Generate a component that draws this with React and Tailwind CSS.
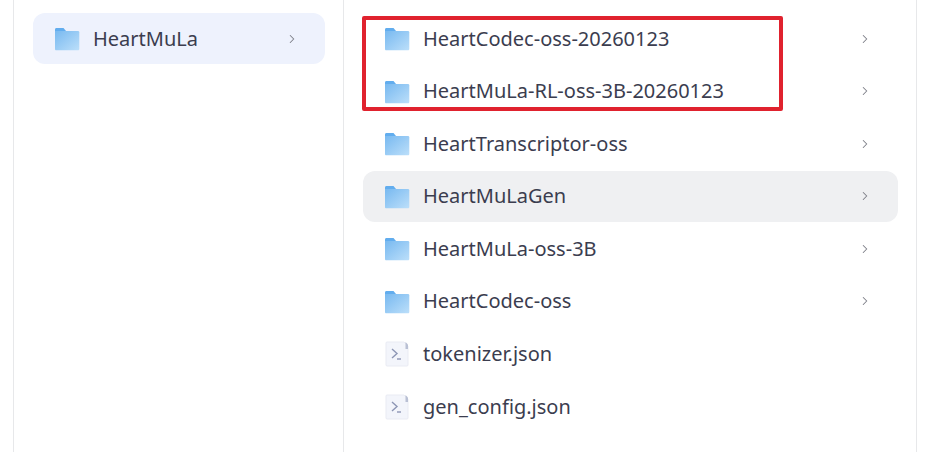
import React from 'react';
import { ChevronRight } from 'lucide-react';

const items = [
  { name: 'HeartCodec-oss-20260123', type: 'folder' },
  { name: 'HeartMuLa-RL-oss-3B-20260123', type: 'folder' },
  { name: 'HeartTranscriptor-oss', type: 'folder' },
  { name: 'HeartMuLaGen', type: 'folder', hover: true },
  { name: 'HeartMuLa-oss-3B', type: 'folder' },
  { name: 'HeartCodec-oss', type: 'folder' },
  { name: 'tokenizer.json', type: 'file' },
  { name: 'gen_config.json', type: 'file' },
];

function FolderIcon({ id }) {
  return (
    <svg width="26" height="25" viewBox="0 0 26 25" className="shrink-0">
      <defs>
        <linearGradient id={id} x1="0" y1="0" x2="1" y2="1">
          <stop offset="0" stopColor="#78b9f0" />
          <stop offset="1" stopColor="#bcdffa" />
        </linearGradient>
      </defs>
      <path d="M1 3.5C1 2.5 1.7 2 2.5 2H9.5L12 5H1Z" fill="#62adee" />
      <path d="M1 5H24C24.7 5 25.3 5.6 25.3 6.3V23C25.3 23.7 24.7 24.3 24 24.3H2.2C1.5 24.3 1 23.7 1 23Z" fill={`url(#${id})`} />
      <rect x="21" y="10" width="2" height="2" fill="#a3cff3" />
    </svg>
  );
}

function FileIcon() {
  return (
    <svg width="26" height="26" viewBox="0 0 26 26" className="shrink-0">
      <path d="M3 1H20L24 5V24C24 24.6 23.6 25 23 25H3C2.4 25 2 24.6 2 24V2C2 1.4 2.4 1 3 1Z" fill="#f3f5fb" stroke="#e9ebf3" />
      <path d="M21.5 1L24 3.5V8H21.5Z" fill="#b9c0d4" />
      <path d="M8 8L13 12.5L8 17" fill="none" stroke="#8d96b5" strokeWidth="1.4" />
      <path d="M13 18H17" fill="none" stroke="#8d96b5" strokeWidth="1.4" />
    </svg>
  );
}

function Row({ item, index }) {
  return (
    <div className={`flex items-center h-[51px] pl-[21px] pr-[26px] rounded-xl ${item.hover ? 'bg-[#eff0f2]' : ''}`}>
      {item.type === 'folder' ? <FolderIcon id={`folder-${index}`} /> : <FileIcon />}
      <span className="ml-[13px] flex-1 text-[20px] text-[#3b3d4f]">{item.name}</span>
      {item.type === 'folder' && <ChevronRight className="w-[14px] h-[16px] text-[#7d7f88]" strokeWidth={1.8} />}
    </div>
  );
}

export default function App() {
  return (
    <div className="relative w-[940px] h-[452px] bg-white overflow-hidden pl-[13px] pr-[23px] font-['Noto_Sans',sans-serif]">
      <div className="flex h-full border-x border-[#e7e8ea]">
        {/* Left column */}
        <div className="w-[330px] border-r border-[#e7e8ea] pl-[19px] pr-[18px] pt-[13px]">
          <div className="flex items-center h-[51px] pl-[21px] pr-[26px] rounded-xl bg-[#eef2fd]">
            <FolderIcon id="folder-parent" />
            <span className="ml-[13px] flex-1 text-[20px] text-[#3b3d4f]">HeartMuLa</span>
            <ChevronRight className="w-[14px] h-[16px] text-[#7d7f88]" strokeWidth={1.8} />
          </div>
        </div>

        {/* Right column */}
        <div className="flex-1 pl-[19px] pr-[18px] pt-[13px] flex flex-col gap-[1.6px]">
          {items.map((item, i) => (
            <Row key={item.name} item={item} index={i} />
          ))}
        </div>
      </div>

      {/* Red highlight */}
      <div className="absolute left-[362px] top-[16px] w-[421px] h-[95px] border-[4px] border-[#e0222e] rounded-[2px]" />
    </div>
  );
}
